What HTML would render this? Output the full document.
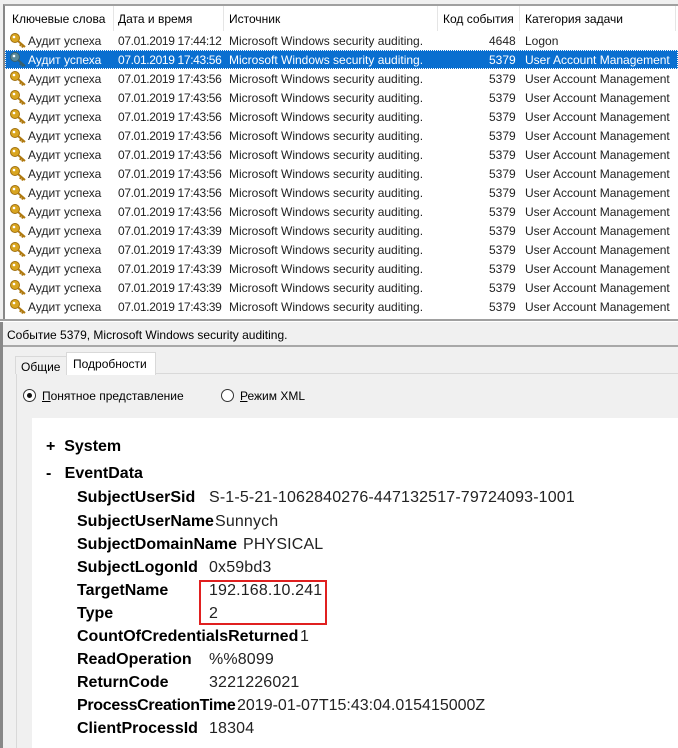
<!DOCTYPE html>
<html><head><meta charset="utf-8"><style>
*{margin:0;padding:0;box-sizing:border-box}
body{width:678px;height:748px;overflow:hidden;background:#f0f0f0;font-family:"Liberation Sans",sans-serif;position:relative;color:#000}
.abs{position:absolute;white-space:nowrap}
#list{position:absolute;left:3px;top:4px;width:675px;height:315px;background:#fff;border-left:2px solid #888;border-top:2px solid #a0a0a0}
.hdr{position:absolute;left:0;top:0;width:100%;height:25px;font-size:12px;color:#000}
.hdr span{position:absolute;top:6px}
.hdr i{position:absolute;top:0;width:1px;height:25px;background:#e5e5e5}
.row{position:absolute;left:0;width:100%;height:19px;font-size:12px;color:#222}
.row span{position:absolute;top:3px;white-space:nowrap}
.row .d{letter-spacing:-0.35px}
.sel{background:#0a6fd0;color:#fff;outline:1px dotted #fff;outline-offset:-1px}
.row svg{position:absolute;left:4px;top:1px}
.lbl{position:absolute;left:77px;font-weight:bold;font-size:16px;white-space:nowrap}
.val{position:absolute;left:209px;font-size:16px;color:#222;letter-spacing:0.15px;white-space:nowrap}
</style></head><body>
<div id="list">
<div class="hdr">
<span style="left:7px">Ключевые слова</span><i style="left:108px"></i>
<span style="left:113px">Дата и время</span><i style="left:218px"></i>
<span style="left:224px">Источник</span><i style="left:432px"></i>
<span style="left:438px">Код события</span><i style="left:514px"></i>
<span style="left:520px">Категория задачи</span><i style="left:670px"></i>
</div>
<div id="rows"></div>
</div>
<script>
var data=[["17:44:12","4648","Logon"],["17:43:56","5379","User Account Management",1]];
for(var i=0;i<8;i++)data.push(["17:43:56","5379","User Account Management"]);
for(var i=0;i<5;i++)data.push(["17:43:39","5379","User Account Management"]);
var h="";data.forEach(function(d,k){var top=25+k*19;var c=d[3]?"#5a8a9a":"#d9a520";
h+='<div class="row'+(d[3]?' sel':'')+'" style="top:'+top+'px"><svg width="20" height="17" viewBox="0 0 20 17"><circle cx="6" cy="6" r="4.5" fill="'+c+'" stroke="'+(d[3]?'#37606e':'#a07010')+'"/><circle cx="5" cy="5" r="1.3" fill="#fff"/><path d="M9 9 L16 15 M12 12 L11 14 M14 13.5 L13 15.5" stroke="'+(d[3]?'#37606e':'#b07a10')+'" stroke-width="2"/></svg><span style="left:23px">Аудит успеха</span><span class="d" style="left:113px">07.01.2019 '+d[0]+'</span><span style="left:224px">Microsoft Windows security auditing.</span><span style="left:484px">'+d[1]+'</span><span style="left:520px">'+d[2]+'</span></div>';});
document.getElementById("rows").innerHTML=h;
</script>
<div class="abs" style="left:0;top:319px;width:678px;height:3px;background:#a0a0a0;border-bottom:1px solid #fff"></div>
<div class="abs" style="left:0;top:322px;width:3px;height:426px;background:#888"></div>
<div class="abs" style="left:7px;top:328px;font-size:12px">Событие 5379, Microsoft Windows security auditing.</div>
<div class="abs" style="left:3px;top:345px;width:675px;height:2px;background:#a8a8a8"></div>
<div class="abs" style="left:16px;top:373px;width:662px;height:375px;background:#f0f0f0;border-left:1px solid #d9d9d9;border-top:1px solid #d9d9d9"></div>
<div class="abs" style="left:15px;top:356px;width:52px;height:18px;border:1px solid #d9d9d9;border-bottom:none;font-size:12px;padding:3px 0 0 5px;background:#f0f0f0">Общие</div>
<div class="abs" style="left:66px;top:352px;width:90px;height:23px;border:1px solid #d9d9d9;border-bottom:none;background:#fff;font-size:12px;padding:4px 0 0 6px">Подробности</div>
<div class="abs" style="left:17px;top:375px;width:661px;height:43px;background:#f0f0f0"></div>
<div class="abs" style="left:23px;top:389px;width:13px;height:13px;border:1px solid #333;border-radius:50%;background:#fff"><div style="position:absolute;left:3px;top:3px;width:5px;height:5px;border-radius:50%;background:#111"></div></div>
<div class="abs" style="left:42px;top:389px;font-size:12px"><u>П</u>онятное представление</div>
<div class="abs" style="left:221px;top:389px;width:13px;height:13px;border:1px solid #333;border-radius:50%;background:#fff"></div>
<div class="abs" style="left:240px;top:389px;font-size:12px"><u>Р</u>ежим XML</div>
<div class="abs" style="left:32px;top:418px;width:646px;height:330px;background:#fff"></div>
<div class="abs" style="left:0;top:0;width:678px;height:748px">
<div class="abs" style="left:46px;top:438px;font-size:16px;font-weight:bold">+&nbsp;&nbsp;System</div>
<div class="abs" style="left:46px;top:465px;font-size:16px;font-weight:bold">-&nbsp;&nbsp;&nbsp;EventData</div>
<div class="lbl" style="top:489px">SubjectUserSid</div><div class="val" style="top:489px">S-1-5-21-1062840276-447132517-79724093-1001</div>
<div class="lbl" style="top:513px">SubjectUserName</div><div class="val" style="top:513px;left:215px">Sunnych</div>
<div class="lbl" style="top:536px">SubjectDomainName</div><div class="val" style="top:536px;left:243px">PHYSICAL</div>
<div class="lbl" style="top:559px">SubjectLogonId</div><div class="val" style="top:559px">0x59bd3</div>
<div class="lbl" style="top:582px">TargetName</div><div class="val" style="top:582px">192.168.10.241</div>
<div class="lbl" style="top:605px">Type</div><div class="val" style="top:605px">2</div>
<div class="lbl" style="top:628px">CountOfCredentialsReturned</div><div class="val" style="top:628px;left:300px">1</div>
<div class="lbl" style="top:651px">ReadOperation</div><div class="val" style="top:651px">%%8099</div>
<div class="lbl" style="top:674px">ReturnCode</div><div class="val" style="top:674px">3221226021</div>
<div class="lbl" style="top:697px;letter-spacing:-0.3px">ProcessCreationTime</div><div class="val" style="top:697px;left:237px;letter-spacing:0">2019-01-07T15:43:04.015415000Z</div>
<div class="lbl" style="top:720px">ClientProcessId</div><div class="val" style="top:720px">18304</div>
</div>
<div class="abs" style="left:199px;top:580px;width:128px;height:45px;border:2px solid #e02020"></div>
</body></html>
